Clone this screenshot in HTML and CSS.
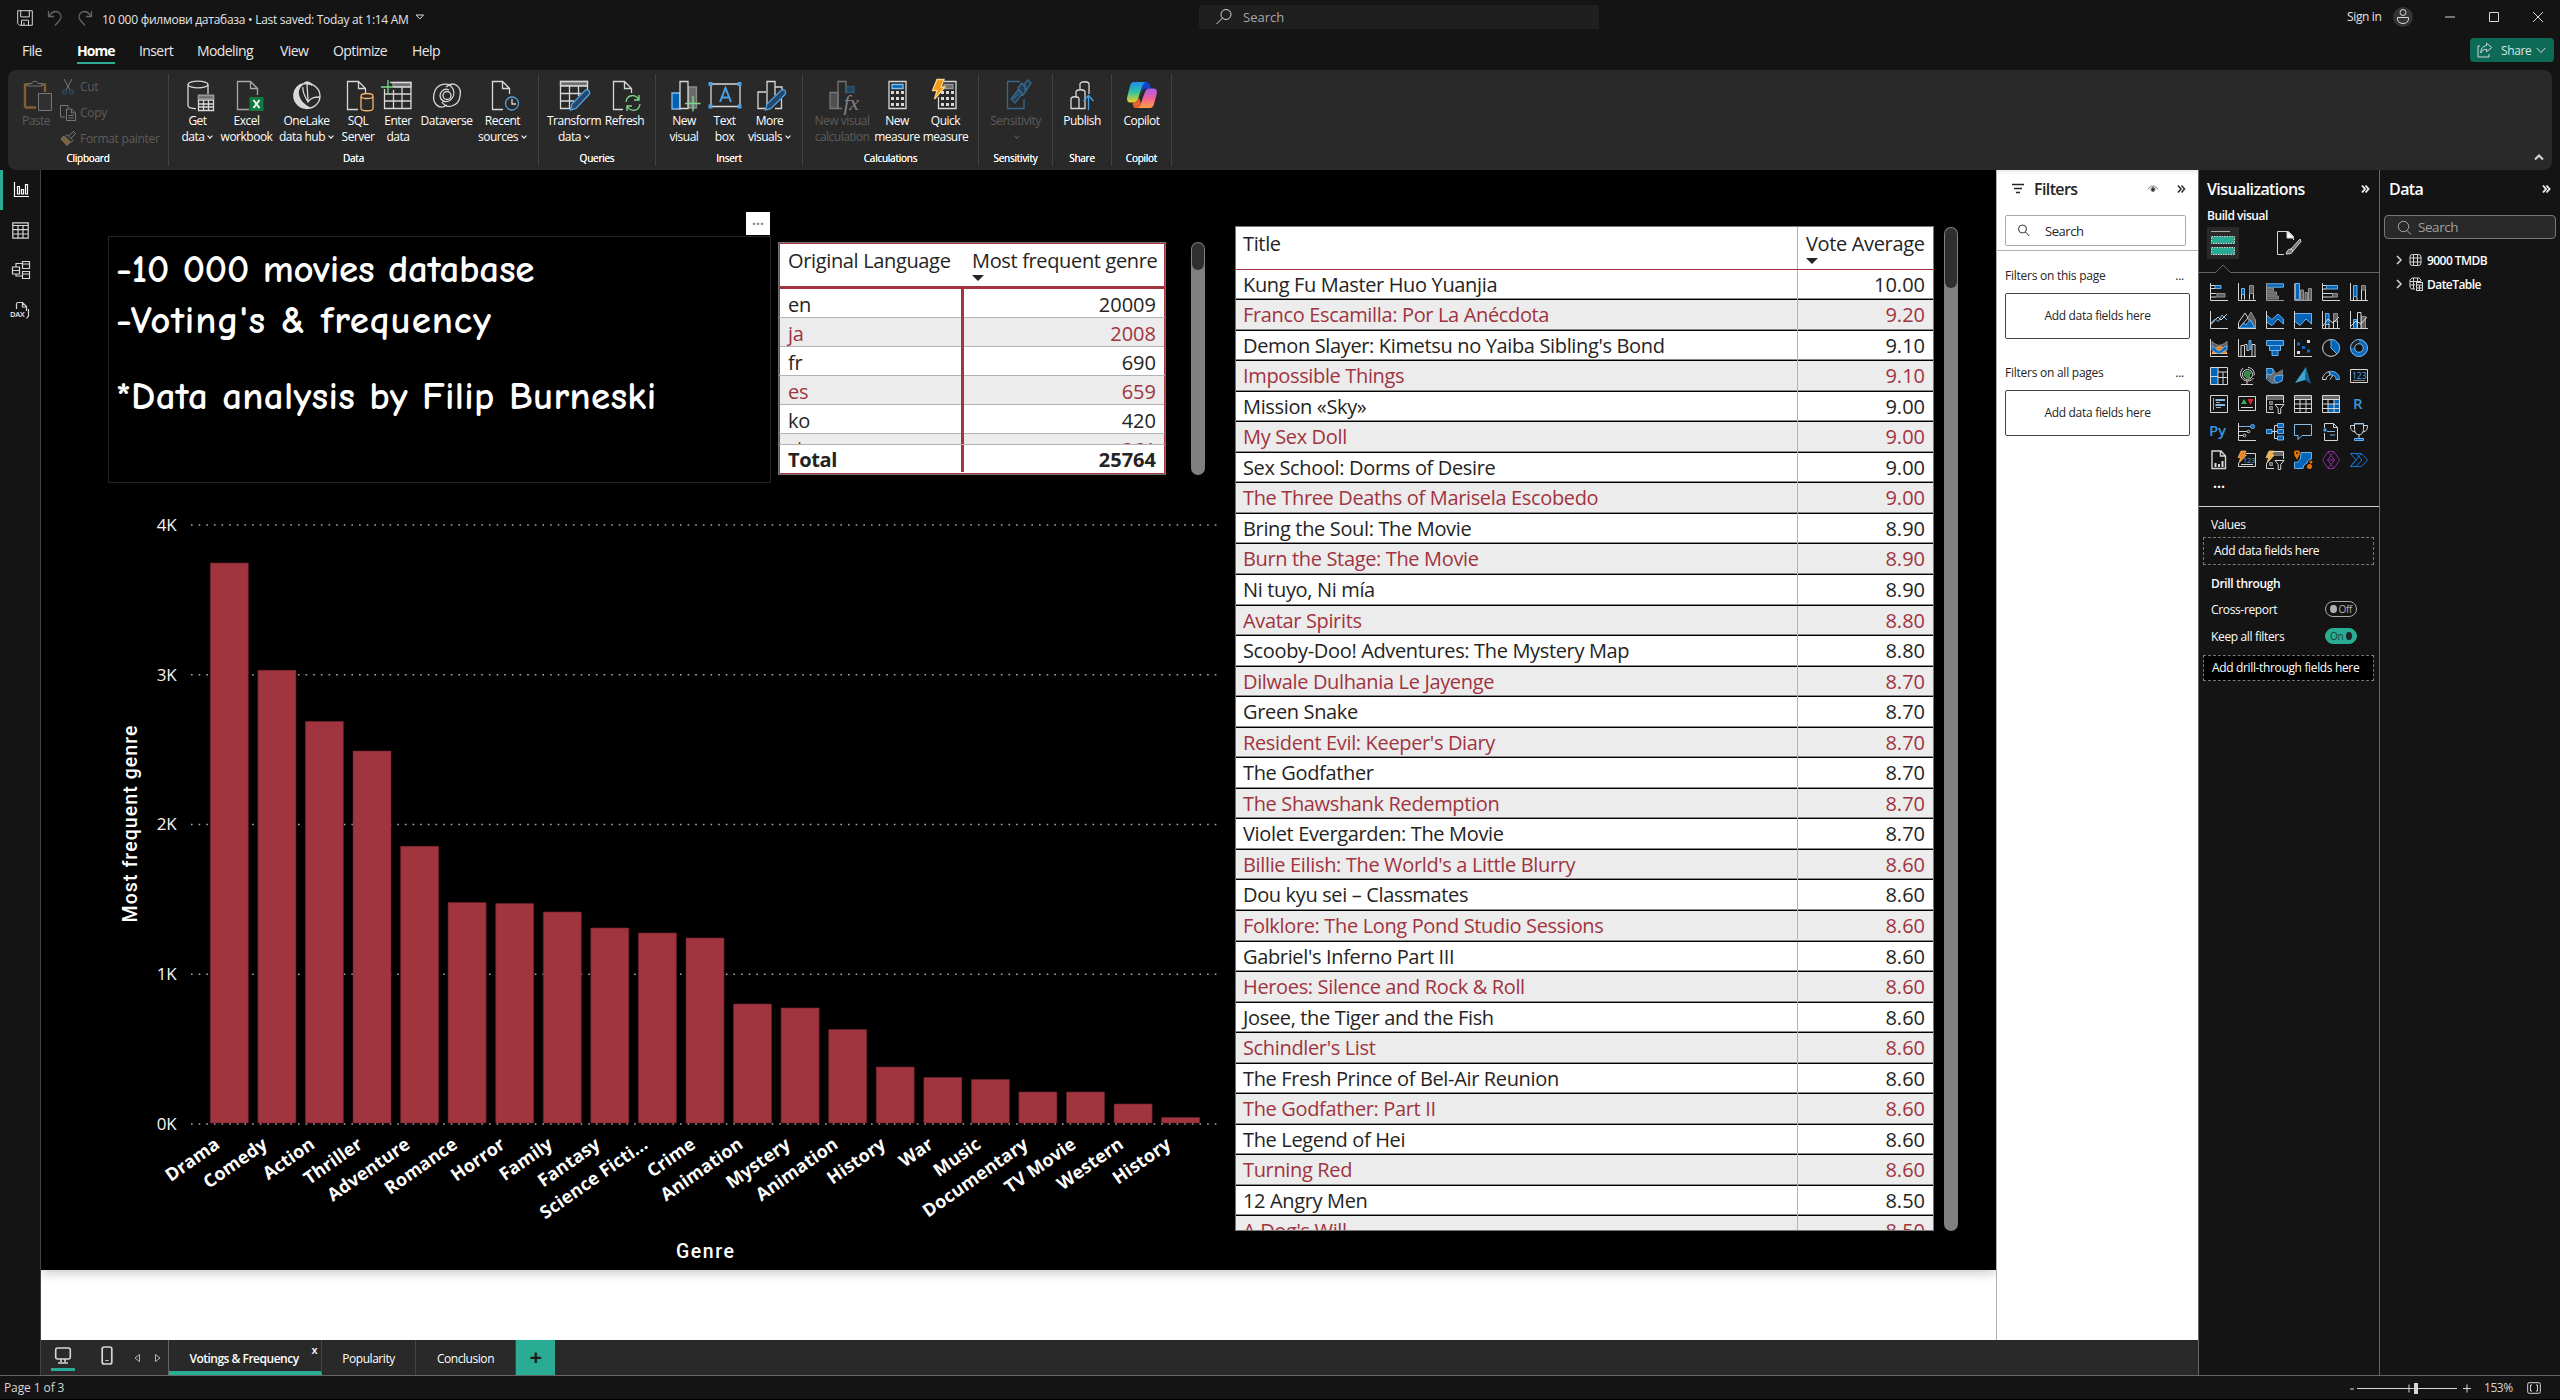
FILE: index.html
```html
<!DOCTYPE html>
<html lang="en">
<head>
<meta charset="utf-8">
<title>10 000 филмови датабаза</title>
<link rel="stylesheet" href="styles.css">
</head>
<body>
<header class="titlebar">
  <div class="quick">
    <svg width="16" height="16" viewBox="0 0 16 16" class="w"><path d="M.7.7h14.6v14.6H2.7l-2-2zM3.7.7v6.2h8.6V.7M4.5 15v-4.800h7V15M7 15v-2.500"/></svg>
    <svg width="16" height="16" viewBox="0 0 16 16" class="dim"><path d="M1.500 1v5.500H7M1.700 6.300C5 1.500 9 .8 11.800 2.500c3.500 2.500 2.500 6 .2 8.500L8 15.500"/></svg>
    <svg width="16" height="16" viewBox="0 0 16 16" class="dim"><path d="M14.500 1v5.500H9M14.300 6.300C11 1.500 7 .8 4.200 2.500.7 5 1.700 8.500 4 11l4 4.500"/></svg>
  </div>
  <div class="doc-title">10 000 филмови датабаза • Last saved: Today at 1:14 AM</div>
  <svg class="title-caret w" width="10" height="7" viewBox="0 0 10 7"><path d="M1 1h7.500L4.800 5z"/></svg>
  <div class="top-search"><svg width="18" height="18" viewBox="0 0 18 18" class="w"><circle cx="11" cy="6.500" r="5"/><path d="M7.500 10 1.500 16"/></svg><span>Search</span></div>
  <div class="signin">Sign in</div>
  <svg class="avatar" width="20" height="20" viewBox="0 0 20 20"><circle cx="10" cy="10" r="10" fill="#333"/><g class="w"><circle cx="10" cy="5.500" r="3"/><path d="M4.500 10.500h11v1.500c0 6-11 6-11 0z"/></g></svg>
  <svg class="winbtns w" width="100" height="12" viewBox="0 0 100 12"><path d="M1 6h10M45.500 1.500h9v9h-9zM89 1l10 10M99 1 89 11"/></svg>
</header>

<nav class="menubar">
  <a class="m-file">File</a><a class="m-home">Home</a><a class="m-insert">Insert</a><a class="m-model">Modeling</a><a class="m-view">View</a><a class="m-opt">Optimize</a><a class="m-help">Help</a>
  <div class="share"><svg width="16" height="16" viewBox="0 0 16 16" class="w"><path d="M3 4H1v11h11v-3M9.500 1.200 14.800 5.500l-5.300 4.200V7.300C6.500 7.300 5 8.500 3.800 11c0-4 2-7 5.700-7.400z"/></svg><span>Share</span><svg width="10" height="7" viewBox="0 0 10 7" class="w"><path d="m.8 1 4.200 4.500L9.200 1"/></svg></div>
</nav>

<section class="ribbon">
  <div class="group g-clip">
    <div class="tools off">
      <div class="btn b-paste"><svg viewBox="0 0 32 32"><path d="M5 27.500V4.500h20V12M5 27.500h11" fill="none" stroke="#80602f" stroke-width="2.400"/><path d="M8 6V3.500h4c0-3 6-3 6 0h4V6z" fill="#292929" stroke="#777"/><path d="M18.500 13.500h13v17h-13z" fill="#303030" stroke="#777"/></svg><p>Paste</p></div>
      <div class="clip-list">
        <div><svg width="16" height="16" viewBox="0 0 16 16" fill="none" stroke="#777"><path d="M4 0l6 11M12 0 6 11"/><g stroke="#2c5878"><circle cx="4.500" cy="13" r="2"/><circle cx="11.500" cy="13" r="2"/></g></svg>Cut</div>
        <div><svg width="16" height="16" viewBox="0 0 16 16" fill="none" stroke="#777"><path d="M5 12H.5V.5H8V3M6.500 4h5l4 4v7.500h-9zM11.500 4v4h4M8.500 10.500h5M8.500 13h5"/></svg>Copy</div>
        <div><svg width="16" height="16" viewBox="0 0 16 16" fill="none" stroke="#777"><path d="M1 8l6 6.500 3-3L3.500 5z" fill="#80602f"/><path d="M5 5.500l2-2 6 6-2 2zM8.500 5l5-4.500 2 2L11 7.500"/></svg>Format painter</div>
      </div>
    </div>
    <h6>Clipboard</h6>
  </div>
  <div class="group g-data">
    <div class="tools">
      <div class="btn w40"><svg viewBox="0 0 32 32" class="i"><ellipse cx="16" cy="4.500" rx="10" ry="3.300"/><path d="M6 4.500v21c0 1.500 3 3 8 3.200M26 4.500V14"/><path d="M16.500 15.500h15v15h-15zM16.500 20h15M16.500 24h15M16.500 27h15M21.500 20v10M26.500 20v10"/><path class="gf" d="M16.500 15.500h15v3.500h-15z"/></svg><p>Get<br>data<i></i></p></div>
      <div class="btn w58"><svg viewBox="0 0 32 32" class="i"><path d="M18 29.500H6.500v-28h13l7 7V15M19.500 1.500v7h7" stroke="#a8a8a8"/><path d="M18.500 17h14v14h-14z" fill="#107c41" stroke="none"/><path d="m22.500 20 6 8M28.500 20l-6 8" stroke="#fff" stroke-width="1.800"/></svg><p>Excel<br>workbook</p></div>
      <div class="btn w62"><svg viewBox="0 0 32 32" class="i"><ellipse cx="16" cy="16" rx="13" ry="12.500"/><path d="M13 3.500c3-3 7-1 8 2M12 4C4 10 6 22 19 28 9 28 3 22 3 15 3 9 7 5 12 4z" fill="#d8d8d8"/><path d="M12 7c-1 5 2 10 5 15 3-5 8-5 12-5M16 3c0 6 1 12 1 19"/></svg><p>OneLake<br>data hub<i></i></p></div>
      <div class="btn w41"><svg viewBox="0 0 32 32" class="i"><path d="M16 29.500H5.500v-28h11l7 7V13M16.500 1.500v7h7"/><path stroke="#f2b36b" d="M19 16.500v12c0 3 12 3 12 0v-12"/><ellipse stroke="#f2b36b" cx="25" cy="16" rx="6" ry="2.500"/></svg><p>SQL<br>Server</p></div>
      <div class="btn w39"><svg viewBox="0 0 32 32" class="i enter"><path class="gf" d="M12 2.500h18v4H12z"/><path d="M9 2.500h21v26H3.500V9M12 7h18M3.500 14h26M3.500 21h26M12.500 10v18M21 7v21"/><path stroke="#7fd88a" d="M0 7h13M7 0v14"/></svg><p>Enter<br>data</p></div>
      <div class="btn w58"><svg viewBox="0 0 32 32" class="i"><path d="M16 25C7 31 1 22 3 14 5 3 18 1 22 9c4 9-7 17-12 10-3-6 3-12 8-9M15 7c8-7 16 0 14 9-1 10-13 14-18 6"/><circle cx="16" cy="15.500" r="4"/></svg><p>Dataverse</p></div>
      <div class="btn w54"><svg viewBox="0 0 32 32" class="i"><path d="M16 29.500H5.500v-28h10l7 7V14M15.500 1.500v7h7"/><circle cx="25" cy="23.500" r="6.500" stroke="#4ea1e0"/><path d="M25 19v5h4" /></svg><p>Recent<br>sources<i></i></p></div>
    </div>
    <h6>Data</h6>
  </div>
  <div class="group g-query">
    <div class="tools">
      <div class="btn w55"><svg viewBox="0 0 32 32" class="i"><path class="gf" d="M2.500 1.500h27v4h-27z"/><path d="M29.500 12V1.500h-27v27H13M2.500 6h27M2.500 13.500h21M2.500 21H16M11.500 6v22M20.500 6v10"/><path stroke="#4ea1e0" fill="#24476a" d="m12.500 30 1.500-6L27 10.500c3-2 6 1 4 4L18 28.500z"/></svg><p>Transform<br>data<i></i></p></div>
      <div class="btn w46"><svg viewBox="0 0 32 32" class="i"><path d="M14 29.500H4.500v-28h11l7 7V13M15.500 1.500v7h7"/><path stroke="#7fd88a" d="M17 22c1-8 10-8 13-2M30 15v5h-5M31 24c-1 8-10 8-13 2M18 31v-5h5"/></svg><p>Refresh</p></div>
    </div>
    <h6>Queries</h6>
  </div>
  <div class="group g-insert">
    <div class="tools">
      <div class="btn w40"><svg viewBox="0 0 32 32" class="i"><path d="M20.500 7h8v21h-8z" fill="#6b6b6b" stroke="#8a8a8a"/><path d="M4 13h8v16H4z" fill="#0063b1" stroke="#83beec"/><path d="M12 1.500h8v27h-8z" fill="#292929"/><path stroke="#7fd88a" d="M17 23.500h15.500M25 16v15.500"/></svg><p>New<br>visual</p></div>
      <div class="btn w41"><svg viewBox="0 0 32 32" class="i"><path d="M2 4h29v22.500H2z"/><path d="m11 22 5.500-14L22 22M12.800 17.500h7.400" stroke="#4ea1e0" stroke-width="2"/><path d="M0 2h4v4H0zM29 2h4v4h-4zM0 24.500h4v4H0zM29 24.500h4v4h-4z" fill="#4ea1e0" stroke="none" transform="translate(-.5)"/></svg><p>Text<br>box</p></div>
      <div class="btn w49"><svg viewBox="0 0 32 32" class="i"><path d="M12 12H4v16.500h9V1.500h8v14M21 7h7v5M27.500 19v9.500H21"/><path stroke="#4ea1e0" fill="#24476a" d="m11.500 30 1.500-6L27 10.500c3-2 6 1 4 4L17 28.500z"/></svg><p>More<br>visuals<i></i></p></div>
    </div>
    <h6>Insert</h6>
  </div>
  <div class="group g-calc">
    <div class="tools">
      <div class="btn off w59"><svg viewBox="0 0 32 32" class="i"><g stroke="#777"><path d="M4 12.500h8v16H4z" fill="#505050"/><path d="M16 28.500h-4v-27h8v12"/></g><path d="M20.500 6.500h7.500v6h-7.500z" fill="#1f4560" stroke="#31566f"/></svg><em>fx</em><p>New visual<br>calculation</p></div>
      <div class="btn w51"><svg viewBox="0 0 32 32" class="i"><path d="M8 1.500h17v27H8z"/><path d="M11 4.500h11v4H11z" fill="#0063b1" stroke="#83beec"/><g stroke-width="3" stroke-dasharray="3 2"><path d="M10 12.500h13M10 18.500h13M10 24.500h13"/></g></svg><p>New<br>measure</p></div>
      <div class="btn w46"><svg viewBox="0 0 32 32" class="i"><path d="M8.500 17v11.500H26v-27H14"/><path class="gf" d="M14 4.500h9v4h-9z"/><g stroke-width="3" stroke-dasharray="3 2"><path d="M11 12.500h13M11 18.500h13M11 24.500h13"/></g><path d="M7-.5h7L11 7h4L4.500 19 7 10.500H2.500z" fill="#f09a1a" stroke="#ffd489"/></svg><p>Quick<br>measure</p></div>
    </div>
    <h6>Calculations</h6>
  </div>
  <div class="group g-sens"><div class="tools"><div class="btn off w59"><svg viewBox="0 0 32 32" fill="none" stroke="#36678a" stroke-width="1.400"><path d="M20 1.500H7.500v27H24V19"/><path d="m11 19 7-9 4 4-7 9zM13 19l6-6M18 8l4-5 5 7-4 5zM25 3l3-3 3 3-3 5-3 2z" fill="#24394a"/></svg><p>Sensitivity<br><i></i></p></div></div><h6>Sensitivity</h6></div>
  <div class="group g-one"><div class="tools"><div class="btn w59"><svg viewBox="0 0 32 32" class="i"><path d="M5 28.500V19c0-3 8-3 8 0v9.500zM10 17v-5c0-3 9-3 9 0v16.500h-6M14 9V4c0-3 9-3 9 0v10"/><path stroke="#4ea1e0" d="M22.500 30V16M17.500 21l5-5.500 5 5.500"/></svg><p>Publish</p></div></div><h6>Share</h6></div>
  <div class="group g-one"><div class="tools"><div class="btn w59"><svg viewBox="0 0 32 32"><defs><linearGradient id="ca" x1="0" y1="0" x2="0" y2="1"><stop offset="0" stop-color="#1d8ef0"/><stop offset=".5" stop-color="#34c3a0"/><stop offset="1" stop-color="#f5cf1b"/></linearGradient><linearGradient id="cb" x1="0" y1="0" x2="0" y2="1"><stop offset="0" stop-color="#a85cf0"/><stop offset=".5" stop-color="#f0609a"/><stop offset="1" stop-color="#ffa040"/></linearGradient></defs><path d="M17 2h3.500c2 0 3 1 3.500 3l1 3.500h-5c-3 0-4.500 3-5.500 6z" fill="#1544c8"/><path d="M8 2h12c-3 1-4 4-5 8l-3 9c-1 2-2 3.500-4 3.500H4.500C2 22.500.5 21 1.200 17L4 6c.8-2.500 2-4 4-4z" fill="url(#ca)"/><path d="M15 24 12 28H9.500c-2 0-2.500-2-3-5.500H8c3 0 4-3 5-5z" fill="#e8602a"/><path d="M24 28H11c3-1 4-4 5-8l3-8c1-2 2-3.500 4-3.500h4c3 0 4.500 1.500 3.700 5.500L28 24c-.8 2.500-2 4-4 4z" fill="url(#cb)"/></svg><p>Copilot</p></div></div><h6>Copilot</h6></div>
  <svg class="collapse w" width="10" height="8" viewBox="0 0 10 8"><path d="M1 6.500 5 2.500l4 4" stroke-width="2"/></svg>
</section>

<main class="workspace">
  <aside class="rail">
    <div class="on"><svg width="16" height="16" viewBox="0 0 16 16" class="w"><path d="M1.500 0v14.500H16M4.500 4.500h2V12h-2zM8.500 7.500h2V12h-2zM12.500 2.500h2V12h-2z" stroke="#fff" stroke-width="1.200"/></svg></div>
    <div><svg width="17" height="17" viewBox="0 0 17 17" class="w"><path d="M.8.8h15.400v15.400H.8zM1 3.500h15M1 7.700h15M1 12h15M6 3.500v12.500M11 3.500v12.500" stroke-width="1.200"/></svg></div>
    <div><svg width="18" height="18" viewBox="0 0 18 18" class="w"><path d="M.5 6h7v7h-7zM.5 9.500h7M10.500.5h7v7h-7zM10.500 3h7M10.500 10.500h7v7h-7zM10.500 13h7M4 6V2.500h6.500M4 13v2h6.500" stroke-width="1.200"/></svg></div>
    <div class="dax"><svg width="17" height="17" viewBox="0 0 17 17" class="w"><path d="M4.500 10V2c0-1 .5-1.500 1.500-1.500h4.500l4 4V9M10.500.5V5H15M16.500 7v7l-2 2.500" stroke-width="1.200"/></svg><b>DAX</b></div>
  </aside>

  <div class="center">
    <div class="canvas">
      <div class="page">
        <div class="textbox"><span class="more">···</span><p class="l1">-10 000 movies database</p><p class="l2">-Voting's &amp; frequency</p><p class="l3">*Data analysis by Filip Burneski</p></div>

        <div class="lang">
          <div class="lr head"><span>Original Language</span><span>Most frequent genre<b class="sort"></b></span></div>
          <div class="lbody">
            <div class="lr"><span>en</span><span>20009</span></div>
            <div class="lr"><span>ja</span><span>2008</span></div>
            <div class="lr"><span>fr</span><span>690</span></div>
            <div class="lr"><span>es</span><span>659</span></div>
            <div class="lr"><span>ko</span><span>420</span></div>
            <div class="lr cut"><span>zh</span><span>361</span></div>
          </div>
          <div class="lr total"><span>Total</span><span>25764</span></div>
        </div>
        <div class="scroll s1"><b></b></div>

        <svg class="chart" width="1130" height="780" viewBox="100 500 1130 780">
          <g class="grid"><path d="M191 525H1217M191 674.800H1217M191 824.400H1217M191 974.200H1217M191 1124H1217"/></g>
          <g class="ylab"><text x="176.500" y="531">4K</text><text x="176.500" y="681">3K</text><text x="176.500" y="830">2K</text><text x="176.500" y="980">1K</text><text x="176.500" y="1130">0K</text></g>
          <path class="bars" d="M210.300 1123V563h38v560zM257.900 1123V670.300h38V1123zM305.400 1123V721.500h38V1123zM353 1123V751h38v372zM400.600 1123V846.300h38V1123zM448.100 1123V902.500h38V1123zM495.700 1123V903.500h38V1123zM543.300 1123V912h38v211zM590.800 1123V928h38v195zM638.400 1123V933h38v190zM686 1123V938h38v185zM733.500 1123V1004h38v119zM781.100 1123V1008h38v115zM828.700 1123V1029.500h38V1123zM876.200 1123V1067h38v56zM923.800 1123V1077.500h38V1123zM971.400 1123V1079.500h38V1123zM1018.900 1123V1092h38v31zM1066.500 1123V1092h38v31zM1114.100 1123V1104h38v19zM1161.600 1123V1117.500h38v5.500z"/>
          <g class="xlab">
            <text transform="translate(221 1147) rotate(-35)">Drama</text><text transform="translate(268.600 1147) rotate(-35)">Comedy</text><text transform="translate(316.100 1147) rotate(-35)">Action</text><text transform="translate(363.700 1147) rotate(-35)">Thriller</text><text transform="translate(411.300 1147) rotate(-35)">Adventure</text><text transform="translate(458.800 1147) rotate(-35)">Romance</text><text transform="translate(506.400 1147) rotate(-35)">Horror</text><text transform="translate(554 1147) rotate(-35)">Family</text><text transform="translate(601.500 1147) rotate(-35)">Fantasy</text><text transform="translate(649.100 1147) rotate(-35)">Science Ficti...</text><text transform="translate(696.700 1147) rotate(-35)">Crime</text><text transform="translate(744.200 1147) rotate(-35)">Animation</text><text transform="translate(791.800 1147) rotate(-35)">Mystery</text><text transform="translate(839.400 1147) rotate(-35)">Animation</text><text transform="translate(886.900 1147) rotate(-35)">History</text><text transform="translate(934.500 1147) rotate(-35)">War</text><text transform="translate(982.100 1147) rotate(-35)">Music</text><text transform="translate(1029.600 1147) rotate(-35)">Documentary</text><text transform="translate(1077.200 1147) rotate(-35)">TV Movie</text><text transform="translate(1124.800 1147) rotate(-35)">Western</text><text transform="translate(1172.300 1147) rotate(-35)">History</text>
          </g>
          <text class="axis" x="705" y="1258" textLength="58">Genre</text>
          <text class="axis" transform="translate(137 824) rotate(-90)" textLength="197">Most frequent genre</text>
        </svg>

        <div class="votes">
          <div class="vr vhead"><span>Title</span><span>Vote Average<b class="sort"></b></span></div>
          <div class="vr"><span>Kung Fu Master Huo Yuanjia</span><span>10.00</span></div>
          <div class="vr"><span>Franco Escamilla: Por La Anécdota</span><span>9.20</span></div>
          <div class="vr"><span>Demon Slayer: Kimetsu no Yaiba Sibling's Bond</span><span>9.10</span></div>
          <div class="vr"><span>Impossible Things</span><span>9.10</span></div>
          <div class="vr"><span>Mission «Sky»</span><span>9.00</span></div>
          <div class="vr"><span>My Sex Doll</span><span>9.00</span></div>
          <div class="vr"><span>Sex School: Dorms of Desire</span><span>9.00</span></div>
          <div class="vr"><span>The Three Deaths of Marisela Escobedo</span><span>9.00</span></div>
          <div class="vr"><span>Bring the Soul: The Movie</span><span>8.90</span></div>
          <div class="vr"><span>Burn the Stage: The Movie</span><span>8.90</span></div>
          <div class="vr"><span>Ni tuyo, Ni mía</span><span>8.90</span></div>
          <div class="vr"><span>Avatar Spirits</span><span>8.80</span></div>
          <div class="vr"><span>Scooby-Doo! Adventures: The Mystery Map</span><span>8.80</span></div>
          <div class="vr"><span>Dilwale Dulhania Le Jayenge</span><span>8.70</span></div>
          <div class="vr"><span>Green Snake</span><span>8.70</span></div>
          <div class="vr"><span>Resident Evil: Keeper's Diary</span><span>8.70</span></div>
          <div class="vr"><span>The Godfather</span><span>8.70</span></div>
          <div class="vr"><span>The Shawshank Redemption</span><span>8.70</span></div>
          <div class="vr"><span>Violet Evergarden: The Movie</span><span>8.70</span></div>
          <div class="vr"><span>Billie Eilish: The World's a Little Blurry</span><span>8.60</span></div>
          <div class="vr"><span>Dou kyu sei – Classmates</span><span>8.60</span></div>
          <div class="vr"><span>Folklore: The Long Pond Studio Sessions</span><span>8.60</span></div>
          <div class="vr"><span>Gabriel's Inferno Part III</span><span>8.60</span></div>
          <div class="vr"><span>Heroes: Silence and Rock &amp; Roll</span><span>8.60</span></div>
          <div class="vr"><span>Josee, the Tiger and the Fish</span><span>8.60</span></div>
          <div class="vr"><span>Schindler's List</span><span>8.60</span></div>
          <div class="vr"><span>The Fresh Prince of Bel-Air Reunion</span><span>8.60</span></div>
          <div class="vr"><span>The Godfather: Part II</span><span>8.60</span></div>
          <div class="vr"><span>The Legend of Hei</span><span>8.60</span></div>
          <div class="vr"><span>Turning Red</span><span>8.60</span></div>
          <div class="vr"><span>12 Angry Men</span><span>8.50</span></div>
          <div class="vr"><span>A Dog's Will</span><span>8.50</span></div>
        </div>
        <div class="scroll s2"><b></b></div>
      </div>

      <aside class="filters">
        <div class="pane-head"><svg width="14" height="12" viewBox="0 0 14 12" fill="none" stroke="#252423" stroke-width="1.500"><path d="M1 1.500h12M3 5.500h8M5 9.500h4"/></svg><strong>Filters</strong><svg class="eye" width="12" height="10" viewBox="0 0 12 10" fill="none" stroke="#777"><path d="M1 5.500c2-4.500 8-4.500 10 0"/><circle cx="6" cy="5.500" r="2" fill="#333"/></svg><svg class="chev" width="9" height="10" viewBox="0 0 9 10" fill="none" stroke="#333" stroke-width="1.600"><path d="m1 1.500 3 3.500-3 3.500M4.500 1.500l3 3.500-3 3.500"/></svg></div>
        <div class="fsearch"><svg width="13" height="13" viewBox="0 0 13 13" fill="none" stroke="#333"><circle cx="5.500" cy="5" r="4"/><path d="m8.500 8 3.700 4"/></svg>Search</div>
        <div class="flabel">Filters on this page<span>...</span></div>
        <div class="fbox">Add data fields here</div>
        <div class="flabel two">Filters on all pages<span>...</span></div>
        <div class="fbox">Add data fields here</div>
      </aside>
    </div>

    <footer class="tabs">
      <div class="devices">
        <svg width="24" height="28" viewBox="0 0 24 28" class="w"><rect x="4.700" y="3" width="14.600" height="11" rx="2" stroke-width="1.600"/><path d="M7 18h10M10 14v3M14 14v3" stroke-width="1.600"/><path d="M0 24.500h24" stroke="#2aac94" stroke-width="3"/></svg>
        <svg class="phone w" width="12" height="19" viewBox="0 0 12 19"><rect x="1.200" y="1" width="9.600" height="17" rx="2" stroke-width="1.700"/><path d="M4.500 14.500h3"/></svg>
        <svg class="arrows" width="27" height="10" viewBox="0 0 27 10" fill="none" stroke="#b5b5b5"><path d="M5.500 1.500v7L1 5zM21.500 1.500v7L26 5z"/></svg>
      </div>
      <div class="tab t1">Votings &amp; Frequency<b>x</b></div><div class="tab t2">Popularity</div><div class="tab t3">Conclusion</div><div class="add">+</div>
    </footer>
  </div>

  <aside class="viz">
    <div class="pane-head"><strong>Visualizations</strong><svg class="chev" width="9" height="10" viewBox="0 0 9 10" fill="none" stroke="#eee" stroke-width="1.900"><path d="m1 1.500 3 3.500-3 3.500M4.500 1.500l3 3.500-3 3.500"/></svg></div>
    <div class="build">Build visual</div>
    <div class="modes">
      <svg width="32" height="32" viewBox="0 0 32 32"><path fill="#292929" d="M0 0h32v32H0z"/><path d="M4 4.500h19" stroke="#aaa"/><g fill="#2aac94" stroke="#d8d8d8" stroke-dasharray="1.500 1"><path d="M4.500 9.500h23v7h-23zM4.500 20.500h23v7h-23z"/></g></svg>
      <svg width="26" height="26" viewBox="0 0 26 26" class="w"><path d="M8 24.500H1.500v-23h11l5 5V10"/><path d="M11 1v7h7z" fill="#fff"/><path d="m24 9-9 10 2 2 8-9.500zM15 19c-3 0-4 2-5 5 3 0 6 0 7-3" fill="#777"/></svg>
    </div>
    <svg class="notch" width="180" height="9" viewBox="0 0 180 9" fill="none" stroke="#666"><path d="M0 8.500h16.500l7.500-7.500 7.500 7.500H180"/></svg>
    <div class="icons">
      <svg viewBox="0 0 18 18" class="w"><path class="b" d="M5 2.500h6v3H5z"/><path class="g" d="M7 10.500h8v3.500H7z"/><path d="M.5 0v17.500H18M.5 2.500H5M.5 5.500H5M.5 10.500h6M.5 14h6"/></svg>
      <svg viewBox="0 0 18 18" class="w"><path class="b" d="M3.500 5.500h3v6h-3z"/><path class="g" d="M11.500 2.500h4v8h-4z"/><path d="M.5 0v17.500H18M3.500 11.500v5M6.500 11.500v5M11.500 10.500v6M15.500 10.500v6"/></svg>
      <svg viewBox="0 0 18 18" class="w"><path class="b" d="M.5.800h17v3.400H.5z"/><path class="g" d="M.5 5h7v3h-7zM.5 9h10v3H.5zM.5 13h12v3H.5z" fill="none"/><path stroke="#999" d="M.5 0v17.500H18"/></svg>
      <svg viewBox="0 0 18 18" class="w"><path class="b" d="M1.500.500h4v16h-4z"/><path class="g" d="M6.500 7h3v10h-3zM11 9.500h2.500V17H11zM14.500 5.500h3V17h-3z" fill="none"/><path stroke="#999" d="M.5 0v17.500H18"/></svg>
      <svg viewBox="0 0 18 18" class="w"><path class="b" d="M4.500 2.500h11v3.500h-11z"/><path class="g" d="M10.500 10.500h5v3.500h-5z"/><path d="M.5 0v17.500H18M.5 2.500h4M.5 6h4M.5 10.500h10M.5 14h10"/></svg>
      <svg viewBox="0 0 18 18" class="w"><path class="b" d="M3.500 2.500h3.500v11H3.500z"/><path class="g" d="M11.500 2.500h4v4.500h-4z"/><path d="M.5 0v17.500H18M3.500 14v3M7 14v3M11.500 7v10M15.500 7v10"/></svg>

      <svg viewBox="0 0 18 18" class="w"><path d="M.5 0v17.500H18M1 13.500 8 6l3 3 6-6"/><path class="l" d="m1 12 4-4 3.500 2.500L12 4l5 5"/></svg>
      <svg viewBox="0 0 18 18" class="w"><path class="g" d="M13 1 9.500 7l6.500 9.500h1.500V9z"/><path d="M7 2 .5 11.500v6L10 7z"/><path class="b" d="m1 17 5-5 2 2 4-5.500 5 8.500z"/><path d="M0 17.500h18"/></svg>
      <svg viewBox="0 0 18 18" class="w"><path class="b" d="M.5 4 6 8.500 12 3l5.500 5V13L12 8l-6 6.500L.5 11z"/><path d="M.5 0v17.500H18"/></svg>
      <svg viewBox="0 0 18 18" class="w"><path class="b" d="M.5 2.500h17V13L12 8l-6 6.500L.5 10z"/><path d="M.5 0v17.500H18"/></svg>
      <svg viewBox="0 0 18 18" class="w"><path class="b" d="M3.500 2.500h3.500v11H3.500z"/><path class="g" d="M11.500 2.500h4v8h-4z"/><path d="M.5 0v17.500H18M3.500 13.500v4M7 13v4M11.500 10v7M15.500 10v7M1 15l5-7 5 4 6-6"/></svg>
      <svg viewBox="0 0 18 18" class="w"><path class="b" d="M3.500 8.500H7v9H3.500z"/><path class="g" d="M11.500 5.500h4v12h-4z"/><path d="M.5 0v17.500H18M7.500 17V1.500h3.500V17M1 15l5-5 5 3 6-7"/></svg>

      <svg viewBox="0 0 18 18" class="w"><path class="g" d="M2 2.500c5 5 9 5 15 0V8c-5 4-10 4-15 0z"/><path d="M2 14.500c4-9 11-9 15 0z" fill="#e87d1a" stroke="#ffb060"/><path class="b" d="M2 7c4 1 4 5 7 5s4-5 8-5v4c-4 0-4 3.500-8 3.500S5 12 2 11z"/><path d="M.5 0v17.500H18"/></svg>
      <svg viewBox="0 0 18 18" class="w"><path class="b" d="M11 1.500h2v9h-2z"/><path d="M.5 0v17.500H18M3 17V6.500h3.500V17M6.500 5.500H9v6h2M14 17V5.500h3V17"/></svg>
      <svg viewBox="0 0 18 18" class="w"><path class="b" d="M.5 1.500h17v5H.5zM3.500 6.500h11v5h-11zM6 11.500h6v5H6z"/></svg>
      <svg viewBox="0 0 18 18" class="w"><path d="M.5 0v17.500H18"/><path d="M3 3.500h3v3H3zM8 7h3v3H8zM13 10.500h3v3h-3z" fill="#0a6cc4" stroke="none"/><path d="M3 12h3v3H3zM13 1h3v3h-3z" fill="#ddd" stroke="none"/></svg>
      <svg viewBox="0 0 18 18" class="w"><circle cx="9" cy="9" r="8.400"/><path class="b" d="M9 .6V9l6 6A8.400 8.400 0 0 0 9 .6z"/></svg>
      <svg viewBox="0 0 18 18"><circle cx="9" cy="9" r="6.500" fill="none" stroke="#0a6cc4" stroke-width="4"/><path d="M2.500 9A6.500 6.500 0 0 1 9 2.500" stroke="#222" stroke-width="4" fill="none"/><g fill="none" stroke="#83beec"><circle cx="9" cy="9" r="8.500"/><circle cx="9" cy="9" r="4.300"/></g></svg>

      <svg viewBox="0 0 18 18" class="w"><path fill="#0464b8" stroke="none" d="M0 0h8v18H0z"/><path d="M.5.500h17v17H.5zM8 .5v17M0 9.500h8M8 5h9.500M8 10.500h9.500M13 5v12.500"/></svg>
      <svg viewBox="0 0 18 18" class="w"><circle cx="9.500" cy="7.500" r="5"/><path d="M5 1C0 6 3 14 9.500 14c3 0 5-1.500 6-3M9 14v3M3 17.500h12M10 .500c4 0 7 4 6 8"/><path d="m7 5 3-1 3 2-2 2 1 3-3 0-3-3z" fill="#2f8a46" stroke="#5db878" stroke-width=".7"/></svg>
      <svg viewBox="0 0 18 18"><path d="M0 1h7l3 5 7-4v9l-6 4-5 1-5-5z" fill="#6b6b6b"/><path class="b" d="M.5 1.500H6L7.500 5 5 8 1 7zM9 9l8-1-1 6-5 2-3-3z"/><path class="l" d="M.5 7v5l5 4h6"/></svg>
      <svg viewBox="0 0 18 18"><path d="m12 0 5 17-6-4z" fill="#1c5f8c"/><path d="m12 0-1 13L1 16z" fill="#3da5d0"/></svg>
      <svg viewBox="0 0 18 18" class="w"><path d="M.5 12.500c0-4 3-7 6.500-7.800L8 8c-2 .5-4 2-4 4.500zM8 12.500l3.500-5"/><path class="b" d="M7.500 4.500C13 3.500 17.500 7 17.500 12.500H14c0-3-2-4.800-5.500-4.500z"/></svg>
      <svg viewBox="0 0 18 18" class="w"><path d="M.5 2.500h17v13H.5z"/><text x="2" y="12" class="num">123</text><path d="M3 13.500h12" stroke="#888"/></svg>

      <svg viewBox="0 0 18 18" class="w"><path d="M.5.500h17v17H.5z"/><path d="M3.500 3v12M6 7.500h4M6 12.500h5" stroke="#aaa"/><path d="M5.500 5H15M5.500 10H15" stroke="#83beec" stroke-width="2"/></svg>
      <svg viewBox="0 0 18 18" class="w"><path d="M.5 1.500h17v14H.5zM3 12.500h12"/><path d="m3 9 3-5 3 5z" fill="#3faa58" stroke="none"/><path d="m9.500 4 3 6 3-6z" fill="#e02a2a" stroke="none"/></svg>
      <svg viewBox="0 0 18 18" class="w"><path d="M17.500 8V.5H.5v17H8M.5 4h17"/><path fill="#666" stroke="none" d="M1 1h16v3H1z"/><path class="g" d="M3.500 6.500h3v3h-3zM3.500 11.500h3v3h-3z"/><path d="M9 9.500h9l-3.300 4v5h-2.500v-5z"/></svg>
      <svg viewBox="0 0 18 18" class="w"><path fill="#666" stroke="none" d="M1 1h16v3H1z"/><path d="M.5.500h17v17H.5zM.5 4.500h17M.5 9h17M.5 13.500h17M6 4.500v13M12 4.500v13"/></svg>
      <svg viewBox="0 0 18 18" class="w"><path fill="#666" stroke="none" d="M1 1h16v3H1z"/><path fill="#0464b8" stroke="none" d="M12 4h6v14H6V9h6z"/><path d="M.5.500h17v17H.5zM.5 4.500h17M.5 9h17M.5 13.500h17M6 4.500v13M12 4.500v13"/></svg>
      <svg viewBox="0 0 18 18"><text x="3" y="14" class="big">R</text></svg>

      <svg viewBox="0 0 18 18"><text x="-1" y="13" class="big">Py</text></svg>
      <svg viewBox="0 0 18 18" class="w"><path d="M.5 0v17.500H18M1 8.500h8M1 12.500h4" /><circle cx="10.500" cy="8.500" r="1.300"/><circle cx="6.500" cy="12.500" r="1.300"/><path class="l" d="M1 3.500h11"/><circle class="b" cx="14.500" cy="3.500" r="2"/></svg>
      <svg viewBox="0 0 18 18" class="w"><path d="M6 8.500h5M8.500 2.500v13M8.500 2.500H11M8.500 15.500H11"/><path class="b" d="M.5 6.500H6v4H.5zM11.500.500h6v4h-6zM11.500 6.500h6v4h-6zM11.500 13h6v4h-6z"/></svg>
      <svg viewBox="0 0 18 18"><path fill="none" stroke="#83beec" d="M.5 1.500h17v11H8L4 16.500v-4H.5z"/></svg>
      <svg viewBox="0 0 18 18" class="w"><path d="M2.500 5V.5h9l4 4v13h-13V10M11.500.5v4h4"/><path class="l" d="M5 8.500h8M8 12h5"/><circle cx="3" cy="7" r="1.800" fill="#4ea1e0" stroke="none"/></svg>
      <svg viewBox="0 0 18 18" class="w"><path d="M4.500.500h9v6c0 7-9 7-9 0zM4.500 2.500h-4c0 4 1 6 5 6.500M13.500 2.500h4c0 4-1 6-5 6.500M9 12v3"/><path class="b" d="M4.500 15.500h9v2h-9z"/><path class="l" d="M4 1h10"/></svg>

      <svg viewBox="0 0 18 18" class="w"><path d="M2 0h9l4.500 5v12.500H2zM10.500 0v5H16" stroke-width="1.400"/><path d="M4.500 12h2v4h-2zM8 13h2v3H8zM11.500 10h2v6h-2z" fill="#ddd" stroke="none"/></svg>
      <svg viewBox="0 0 18 18" class="w"><path d="M8 2.500h9.500v13H.5V12M3 13.500h12"/><text x="5" y="12" class="num small">123</text><path d="M3 0h5L6.500 4h2L1 12l1.500-5.500H0z" fill="#f08020" stroke="#ffd489" stroke-width=".6"/></svg>
      <svg viewBox="0 0 18 18" class="w"><path d="M8 .5h9.500V8M9 4h8M.5 12v5.500H8"/><path fill="#666" stroke="none" d="M8 1h9v3H8z"/><path class="g" d="M3.500 11.500h3v3h-3z"/><path d="M9 9.500h9l-3.300 4v5h-2.500v-5z"/><path d="M3 0h5L6.500 4h2L1 12l1.500-5.500H0z" fill="#f0b050" stroke="#ffe0a0" stroke-width=".6"/></svg>
      <svg viewBox="0 0 18 18"><path class="b" d="M7 1.500h10.500V8c-2 0-4 1-4.500 4l-3 2-1 3.500H.5V11c3 1 5-1 6-4z"/><path d="M0 1.500c0-3 6-3 6 0S4 6 3 9C2 6 0 5 0 1.500z" fill="#e67300"/><circle cx="3" cy="2" r="1" fill="#141414"/><circle cx="15.500" cy="15.500" r="2.500" fill="#e67300"/><circle cx="17" cy="11" r="1.500" fill="#e67300"/></svg>
      <svg viewBox="0 0 18 18" fill="none" stroke="#8a2a9a"><path d="M6 .5h6L17.500 9 12 17.500H6L.5 9z"/><path d="M9 4.500 5.500 9 9 13.500 12.500 9zM6 1l3 3.500L12 1M6 17l3-3.500 3 3.500M5.500 9l7 0"/></svg>
      <svg viewBox="0 0 18 18" fill="none" stroke="#1478d8"><path d="M.5 2.500h11l6 6.500-6 6.500H.5L6 9zM6 2.500 12 9l-6 6.500M.5 15.500l11-13"/></svg>
      <span>...</span>
    </div>
    <div class="fields">
      <p>Values</p>
      <div class="well">Add data fields here</div>
      <p class="drill">Drill through</p>
      <div class="opt">Cross-report<span class="tog"><b></b>Off</span></div>
      <div class="opt o2">Keep all filters<span class="tog ton">On<b></b></span></div>
      <div class="well dark">Add drill-through fields here</div>
    </div>
  </aside>

  <aside class="datapane">
    <div class="pane-head"><strong>Data</strong><svg class="chev" width="9" height="10" viewBox="0 0 9 10" fill="none" stroke="#eee" stroke-width="1.900"><path d="m1 1.500 3 3.500-3 3.500M4.500 1.500l3 3.500-3 3.500"/></svg></div>
    <div class="dsearch"><svg width="15" height="15" viewBox="0 0 15 15" fill="none" stroke="#aaa"><circle cx="6.500" cy="6.500" r="5.200"/><path d="m10 10.500 4 4"/></svg>Search</div>
    <div class="node"><svg width="6" height="10" viewBox="0 0 6 10" class="w"><path d="m1 1 4 4-4 4" stroke-width="1.500"/></svg><svg class="ti w" width="14" height="14" viewBox="0 0 14 14"><rect x="1" y="1.500" width="11" height="11" rx="2.500"/><path d="M1 5h11M1 9h11M4.500 1.500v11M8.500 1.500v11"/></svg>9000 TMDB</div>
    <div class="node"><svg width="6" height="10" viewBox="0 0 6 10" class="w"><path d="m1 1 4 4-4 4" stroke-width="1.500"/></svg><svg class="ti w" width="14" height="14" viewBox="0 0 14 14"><path d="M12 4V3L10 1H3L1 3v7.500L3 12h3M1 4.500h11M1 8h5M4.500 1v11M8.500 1v4"/><rect x="7.500" y="5.500" width="6" height="8" fill="#141414"/><path d="M8 8h5M8 11h5M10.500 8v5"/></svg>DateTable</div>
  </aside>
</main>

<footer class="status">
  <span class="pg">Page 1 of 3</span>
  <div class="zoombar"><svg width="125" height="14" viewBox="0 0 125 14" class="w"><path d="M1 8h4M60 3.500v8M8 7.500h100M118 3.500v8M114 7.500h8"/><path d="M67 2v11" stroke-width="4"/></svg><span>153%</span><svg width="14" height="12" viewBox="0 0 14 12" class="w"><rect x=".7" y=".7" width="12.600" height="10.600" rx="1.500"/><path d="M5 3H3.500v6H5M9 3h1.500v6H9"/></svg></div>
</footer>
</body>
</html>
```
FILE: styles.css
```css
* { box-sizing: border-box; }
body { margin: 0; width: 2560px; height: 1400px; overflow: hidden; background: #141414; color: #fff; font-family: "Open Sans", "Segoe UI", sans-serif; font-size: 12px; letter-spacing: -0.45px; }
p, h6 { margin: 0; }
svg { display: block; flex: none; overflow: visible; }
.w { fill: none; stroke: #d6d6d6; }
.dim { fill: none; stroke: #666; stroke-width: 1.3; }
.b { fill: #0464b8; stroke: #6fb2e8; }
.g { fill: #606060; stroke: #8f8f8f; }
.l { fill: none; stroke: #6fb2e8; }

/* title bar */
.titlebar { height: 36px; display: flex; align-items: flex-start; color: #e4e4e4; line-height: 18px; }
.quick { display: flex; gap: 14px; padding: 10px 0 0 17px; width: 102px; }
.doc-title { width: 313px; padding-top: 11px; white-space: nowrap; letter-spacing: -0.27px; }
.title-caret { margin-top: 14px; }
.top-search { margin: 5px 0 0 774px; width: 400px; height: 24px; background: #1f1f1f; border-radius: 2px; display: flex; align-items: center; padding-left: 16px; gap: 10px; font-size: 13px; color: #a8a8a8; letter-spacing: 0; }
.signin { margin: 8px 0 0 748px; width: 46px; letter-spacing: -0.35px; }
.avatar { margin-top: 7px; }
.winbtns { margin: 11px 0 0 31px; }

/* menu */
.menubar { height: 34px; display: flex; font-size: 14px; line-height: 29px; color: #e8e8e8; padding-left: 22px; letter-spacing: -0.6px; white-space: nowrap; }
.menubar a { height: 28px; margin-right: 24px; }
.m-file { width: 31px; } .m-home { width: 38px; } .m-insert { width: 34px; } .m-model { width: 59px; } .m-view { width: 29px; } .m-opt { width: 55px; } .m-help { width: 30px; }
.m-home { font-weight: 700; color: #fff; border-bottom: 2px solid #2aac94; letter-spacing: -1px; }
.share { margin: 2px 6px 0 auto; width: 84px; height: 24px; border-radius: 4px; background: #0d6a57; display: flex; align-items: center; padding-left: 7px; font-size: 12px; color: #d4e4e0; letter-spacing: -0.4px; }
.share span { width: 35px; margin-left: 8px; }

/* ribbon */
.ribbon { position: relative; margin-left: 8px; width: 2544px; height: 100px; background: #292929; border-radius: 8px; display: flex; padding: 4px 0; }
.group { height: 92px; border-right: 1px solid #414141; display: flex; flex-direction: column; align-items: center; }
.g-clip { width: 161px; } .g-data { width: 370px; } .g-query { width: 117px; } .g-insert { width: 147px; } .g-calc { width: 176px; } .g-sens { width: 74px; } .g-one { width: 59px; } .g-one + .g-one { width: 60px; }
.tools { height: 77px; padding-top: 6px; display: flex; justify-content: center; }
.btn { position: relative; display: flex; flex-direction: column; align-items: center; }
.btn svg { width: 32px; height: 32px; }
.btn svg.enter { margin-left: -2px; }
.btn p { line-height: 16px; margin-top: 1px; text-align: center; white-space: nowrap; letter-spacing: -0.5px; color: #fff; }
.btn i { display: inline-block; width: 4px; height: 4px; border: solid currentColor; border-width: 0 1px 1px 0; transform: rotate(45deg); margin: 0 1px 3px 4px; }
.btn em { position: absolute; left: 31px; top: 10px; font: italic 22px "Liberation Serif", serif; color: #808080; }
.w40 { width: 40px; } .w58 { width: 58px; } .w62 { width: 62px; } .w41 { width: 41px; } .w39 { width: 39px; } .w54 { width: 54px; } .w55 { width: 55px; } .w46 { width: 46px; } .w49 { width: 49px; } .w59 { width: 59px; } .w51 { width: 51px; }
.i { fill: none; stroke: #d8d8d8; stroke-width: 1.3; }
.gf { fill: #6b6b6b; stroke: #999; }
.btn.off p, .off p, .off { color: #5c5c5c; }
.group h6 { font-size: 10px; font-weight: 400; line-height: 14px; margin-top: -0.5px; letter-spacing: -0.25px; text-shadow: 0 0 .3px #fff; }
.b-paste { width: 40px; margin-left: 8px; }
.clip-list { width: 112px; padding: 0 0 0 4px; display: flex; flex-direction: column; gap: 10px; margin-top: -1px; }
.clip-list div { display: flex; gap: 4px; height: 16px; line-height: 16px; white-space: nowrap; letter-spacing: -0.3px; }
.collapse { position: absolute; right: 8px; bottom: 9px; }

/* layout */
.workspace { display: flex; height: 1205px; }
.rail { width: 41px; border-right: 1px solid #444; }
.rail > div { height: 40px; display: flex; align-items: center; justify-content: center; position: relative; padding-left: 1px; }
.rail .on { border-left: 3px solid #2aac94; padding: 0 2px 0 0; }
.rail .dax b { position: absolute; left: 10px; top: 19px; font-size: 7.500px; line-height: 10px; color: #eee; background: #141414; letter-spacing: -0.2px; font-weight: 600; }
.center { width: 2157px; display: flex; flex-direction: column; }
.canvas { height: 1170px; display: flex; background: #fff; }
.page { position: relative; width: 1955px; height: 1100px; background: #000; box-shadow: 0 2px 12px rgba(0,0,0,.25); clip-path: inset(0 0 -30px 0); }

/* report visuals sit freely on the report page */
.textbox { position: absolute; left: 67px; top: 66px; width: 663px; height: 247px; border: 1px solid #252525; font-family: "Comic Sans MS", "Comic Neue", "Open Sans", sans-serif; font-size: 39px; font-weight: 700; padding: 7px; white-space: nowrap; line-height: 52px; }
.textbox p { height: 52px; }
.textbox .l1 { letter-spacing: -0.2px; } .textbox .l2 { letter-spacing: 0.9px; margin-top: -1px; }
.textbox .l3 { margin-top: 24px; letter-spacing: 0.3px; }
.more { position: absolute; right: 0; top: -25px; width: 24px; height: 23px; background: #fff; color: #888; font: 700 14px/23px "Open Sans", sans-serif; text-align: center; letter-spacing: 0; }
.sort { position: absolute; left: 8px; bottom: 5px; border: 6.500px solid transparent; border-top-color: #252423; border-bottom: 0; }
.lang { position: absolute; left: 737px; top: 72px; width: 388px; height: 233px; overflow: hidden; border: 1px solid #777; background: #fff; font-size: 20px; color: #252423; letter-spacing: -0.35px; box-shadow: inset 0 0 0 1px #a4343f; }
.lr { display: grid; grid-template-columns: 182px 1fr; height: 29px; border-bottom: 1px solid #b3b3b3; line-height: 31px; }
.lr span { padding: 0 9px; position: relative; white-space: nowrap; }
.lr span + span { text-align: right; border-left: 3px solid #a4343f; letter-spacing: 0; }
.lr.head { height: 46px; border-bottom: 3px solid #a4343f; line-height: 35px; }
.lr.head span + span { border-left-color: transparent; text-align: left; padding: 0 0 0 8px; letter-spacing: -0.35px; }
.lbody { height: 156px; overflow: hidden; border-bottom: 1px solid #b3b3b3; box-shadow: inset 1px 0 #a4343f, inset -1px 0 #a4343f; }
.lbody .lr:nth-child(even) { background: #ececec; color: #a0343f; margin: 0 1px; grid-template-columns: 181px 1fr; }
.lbody .lr:nth-child(even) span:first-child { padding-left: 8px; }
.lbody .lr:nth-child(even) span + span { padding-right: 8px; }
.lr.total { font-weight: 700; border: 0; height: 27px; line-height: 30px; }
.lr.total span + span { height: 27px; }
.scroll { position: absolute; width: 14px; border-radius: 7px; background: #808080; padding: 1px; }
.scroll b { display: block; background: #2f2f2f; border-radius: 6px; }
.s1 { left: 1150px; top: 72px; height: 233px; } .s1 b { height: 27px; }
.s2 { left: 1903px; top: 57px; height: 1004px; } .s2 b { height: 60px; }
.votes { position: absolute; left: 1194px; top: 56px; width: 699px; height: 1005px; overflow: hidden; border: 1px solid #777; background: #fff; font-size: 20px; color: #252423; letter-spacing: -0.35px; }
.vr { display: grid; grid-template-columns: 561px 1fr; height: 30.56px; border-bottom: 1px solid #000; box-shadow: inset 0 -1px #8a8a8a; line-height: 30.5px; }
.vr span { padding: 0 8px 0 7px; white-space: nowrap; position: relative; }
.vr span + span { text-align: right; border-left: 1px solid #b3b3b3; letter-spacing: 0; }
.vr:nth-child(odd):not(.vhead) { background: #ececec; color: #a0343f; }
.vhead { height: 42.500px; border-bottom-color: #a4343f; box-shadow: none; line-height: 33px; }
.vhead span + span { text-align: left; padding: 0 0 0 8px; letter-spacing: -0.35px; }

/* bar chart */
.chart { position: absolute; left: 59px; top: 330px; letter-spacing: 0; }
.grid { stroke: #aaa; stroke-width: 1.5; stroke-dasharray: 1.6 6.040; }
.bars { fill: #a0343f; stroke: #6d232b; stroke-width: .6; }
.ylab { font-size: 17px; fill: #f4f4f4; text-anchor: end; letter-spacing: -0.2px; }
.xlab { font-size: 18px; font-weight: 700; fill: #fff; text-anchor: end; letter-spacing: 0.1px; }
.axis { font: 500 19.500px Roboto, sans-serif; fill: #fff; text-anchor: middle; }

/* filters pane */
.filters { position: relative; width: 202px; border-left: 1px solid #b0b0b0; background: linear-gradient(#ececec, #fff 5px); color: #252423; }
.pane-head { display: flex; align-items: center; height: 38px; font-size: 16px; }
.pane-head strong { font-weight: 600; letter-spacing: -0.6px; }
.pane-head .chev { margin-left: auto; }
.filters .pane-head { padding: 0 12px 0 14px; }
.filters strong { margin-left: 9px; }
.eye { margin-left: 69px; }
.fsearch { margin: 7px 0 0 8px; width: 181px; height: 31px; border: 1px solid #aaa; border-radius: 2px; display: flex; align-items: center; padding-left: 11px; gap: 15px; font-size: 13px; background: #fff; }
.filters::after { content: ""; position: absolute; left: 0; right: 0; top: 80px; height: 1px; background: #b0b0b0; }
.flabel { margin: 21px 14px 7px 8px; height: 18px; line-height: 18px; display: flex; justify-content: space-between; letter-spacing: -0.25px; }
.flabel.two { margin-top: 25px; }
.flabel + .fbox { margin-top: 8px; }
.fbox { margin: 0 0 0 8px; width: 185px; height: 46px; border: 1px solid #444; border-radius: 2px; background: #fff; text-align: center; line-height: 44px; letter-spacing: -0.3px; }

/* tabs */
.tabs { height: 35px; background: #292929; display: flex; line-height: 37px; }
.devices { width: 128px; border-right: 1px solid #666; display: flex; padding: 5px 0 0 10px; }
.phone { margin: 1px 0 0 26px; } .arrows { margin: 8px 0 0 21px; }
.tab { border-right: 1px solid #444; text-align: center; position: relative; white-space: nowrap; }
.t1 { width: 153px; border-bottom: 4px solid #2aac94; font-weight: 600; padding-right: 2px; letter-spacing: -0.5px; }
.t1 b { position: absolute; right: 4px; top: -9px; font-size: 11px; font-weight: 600; }
.t2 { width: 94px; } .t3 { width: 100px; }
.add { width: 39px; background: #2aac94; color: #1c1c1c; font: 700 22px/32px "Open Sans", sans-serif; text-align: center; }

/* visualizations pane */
.viz { width: 182px; border-left: 1px solid #666; border-right: 1px solid #666; }
.viz .pane-head { padding: 0 9px 0 8px; }
.build { height: 19px; padding-left: 8px; font-weight: 600; line-height: 15px; }
.modes { display: flex; gap: 37px; padding-left: 8px; height: 37px; }
.modes svg + svg { margin-top: 3px; }
.icons { display: grid; grid-template-columns: repeat(6, 18px); gap: 10px; padding: 10px 0 0 11px; height: 233px; grid-auto-rows: 18px; }
.icons svg { width: 18px; height: 18px; }
.icons span { font-weight: 700; font-size: 14px; line-height: 8px; padding-left: 3px; letter-spacing: 0; }
.num { font: 8.500px "Open Sans", sans-serif; fill: #4ea1e0; stroke: none; letter-spacing: 0; }
.num.small { font-size: 7.500px; letter-spacing: -0.3px; }
.big { font: 600 15px "Open Sans", sans-serif; fill: #3a96dd; letter-spacing: -0.3px; }
.fields { border-top: 1px solid #d0d0d0; padding: 7px 5px 0 4px; letter-spacing: -0.35px; }
.fields p { padding-left: 8px; line-height: 21px; height: 23px; }
.well { height: 28px; border: 1px dashed #777; padding-left: 10px; line-height: 26px; white-space: nowrap; }
.fields .drill { font-weight: 600; margin-top: 8px; height: 25px; line-height: 22px; }
.opt { display: flex; justify-content: space-between; padding: 0 17px 0 8px; height: 18px; line-height: 18px; margin-top: 3px; }
.opt.o2 { margin: 9px 0 9px; }
.tog { width: 32px; height: 16px; border: 1px solid #aaa; border-radius: 8px; font-size: 10px; line-height: 14px; color: #b4b4b4; display: flex; align-items: center; padding: 0 4px; gap: 2px; }
.tog b { width: 8px; height: 8px; border-radius: 50%; background: #b0b0b0; }
.ton { background: #2aac94; border-color: #2aac94; color: #12443a; gap: 3px; } .ton b { background: #222; }
.well.dark { background: #000; height: 26px; line-height: 24px; padding-left: 8px; }

/* data pane */
.datapane { width: 180px; }
.datapane .pane-head { padding: 0 9px; }
.dsearch { margin: 7px 4px 9px; height: 24px; border: 1px solid #777; border-radius: 4px; background: #292929; color: #a0a0a0; display: flex; align-items: center; padding-left: 12px; gap: 6px; font-size: 13.500px; }
.node { display: flex; align-items: center; height: 24px; padding-left: 16px; font-weight: 600; letter-spacing: -0.55px; }
.node .ti { margin: 0 4px 0 7px; }

/* status bar */
.status { height: 25px; border-top: 1px solid #666; border-bottom: 1px solid #000; display: flex; justify-content: space-between; line-height: 24px; padding: 0 19px 0 4px; color: #d6d6d6; }
.status .pg { letter-spacing: -0.1px; }
.zoombar { display: flex; align-items: center; }
.zoombar span { width: 32px; margin: 0 11px 0 10px; }
```
